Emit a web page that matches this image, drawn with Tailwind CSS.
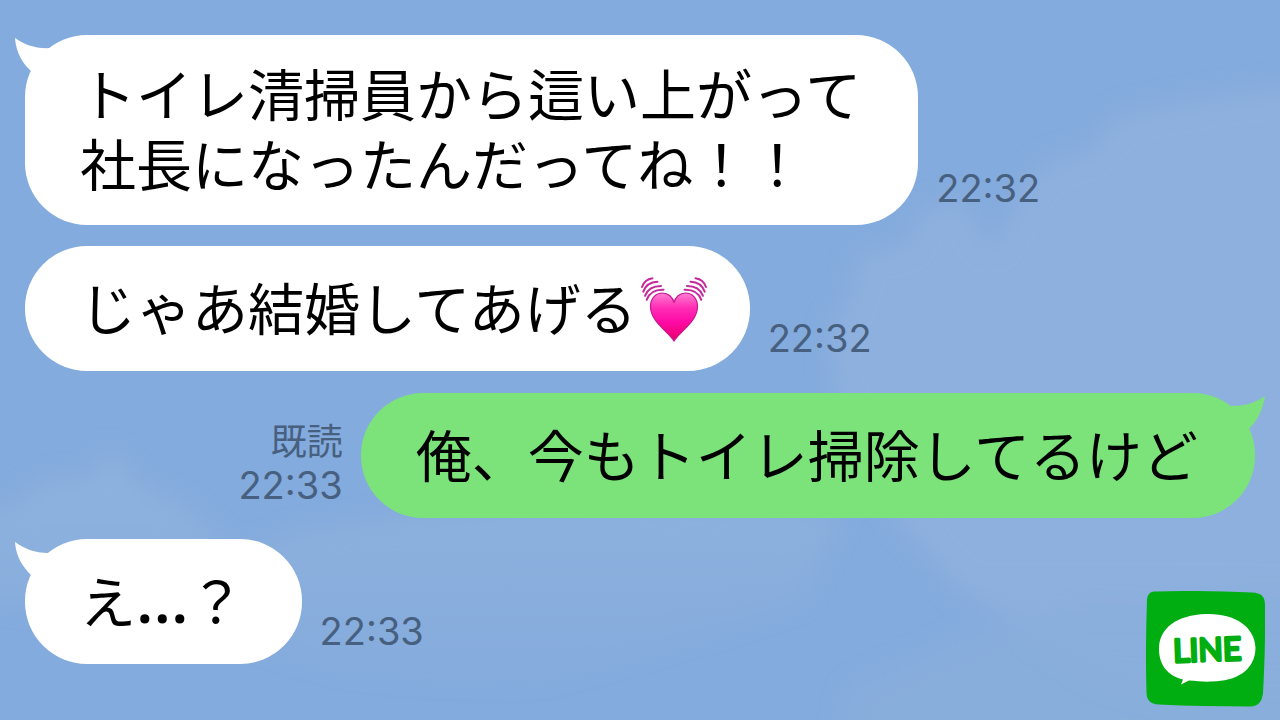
<!DOCTYPE html>
<html lang="ja">
<head>
  <meta charset="utf-8" />
  <meta name="viewport" content="width=device-width, initial-scale=1" />
  <title>LINE トーク</title>
  <script src="https://cdn.jsdelivr.net/npm/@tailwindcss/browser@4"></script>
</head>
<body class="relative min-h-screen overflow-x-hidden bg-[#84abdd] font-['Noto_Sans_CJK_JP',sans-serif] text-black">

  <!-- Sky background -->
  <svg class="absolute inset-0 h-full w-full" viewBox="0 0 1280 720" preserveAspectRatio="none" aria-hidden="true">
    <defs>
      <filter id="soft" x="-20%" y="-20%" width="140%" height="140%"><feGaussianBlur stdDeviation="12" /></filter>
      <linearGradient id="cloudLeft" x1="0" y1="0" x2="0" y2="1">
        <stop offset="0" stop-color="#90b3de" />
        <stop offset="1" stop-color="#90b3de" stop-opacity="0" />
      </linearGradient>
      <linearGradient id="cloudRight" x1="0" y1="0" x2="0" y2="1">
        <stop offset="0" stop-color="#8eb0de" />
        <stop offset="0.75" stop-color="#8eb0de" />
        <stop offset="1" stop-color="#8bafdc" stop-opacity="0.4" />
      </linearGradient>
    </defs>
    <g filter="url(#soft)">
      <path fill="url(#cloudRight)" d="M1310 85 L1200 100 L1120 115 L1090 150 L1045 165 L1020 200 L990 250 L965 200 L925 210 L905 245 L860 255 L850 300 L830 330 L835 390 L900 520 L960 590 L1100 680 L1310 740 Z" />
      <path fill="url(#cloudLeft)" d="M-20 515 L20 500 L50 480 L90 480 L112 450 L130 480 L190 510 L240 560 L290 535 L350 525 L420 515 L700 500 L840 515 L800 600 L520 690 L340 670 L200 620 L-20 600 Z" />
      <path fill="#8bafdc" fill-opacity="0.6" d="M850 690 L960 640 L1080 600 L1310 580 L1310 750 L840 750 Z" />
    </g>
  </svg>

  <main class="relative flex flex-col gap-[21px] px-[25px] py-[35px]">

    <div class="flex items-end gap-[18px]">
      <div class="relative flex min-h-[125px] items-center rounded-[62px] bg-white pt-[22px] pr-[57px] pb-[28px] pl-[55px]">
        <svg class="absolute top-[3px] -left-[10px] h-[34px] w-[44px] text-white" viewBox="0 0 44 34" fill="currentColor" aria-hidden="true">
          <path d="M0 0 C10 7 21 11 36 10 L44 22 L17 34 C8 26 1 15 0 0 Z" />
        </svg>
        <p class="relative text-[56px] leading-[70px]">トイレ清掃員から這い上がって<br>社長になったんだってね！！</p>
      </div>
      <time class="pb-[14px] font-[Inter,sans-serif] text-[38px] leading-[46px] text-[#47607f]">22:32</time>
    </div>

    <div class="flex items-end gap-[18px]">
      <div class="flex min-h-[125px] items-center rounded-[62px] bg-white pt-[22px] pr-[42px] pb-[28px] pl-[55px]">
        <p class="text-[56px] leading-[70px]">じゃあ結婚してあげる</p>
        <svg class="mt-[8px] ml-[3px] h-[66px] w-[68px]" viewBox="0 0 68 66" role="img" aria-label="ドキドキするハート">
          <defs>
            <linearGradient id="heart" x1="0" y1="0" x2="0" y2="1">
              <stop offset="0" stop-color="#ff7fd2" />
              <stop offset="0.3" stop-color="#ff2fb6" />
              <stop offset="0.6" stop-color="#ff0aa6" />
              <stop offset="1" stop-color="#e80068" />
            </linearGradient>
          </defs>
          <path fill="url(#heart)" stroke="#c8188f" stroke-width="1.200" d="M34 64 C29 55 10.500 45 10.500 29.500 C10.500 21 16 16 22.500 16 C28 16 33 20 34 26 C35 20 40 16 45.500 16 C52 16 57.500 21 57.500 29.500 C57.500 45 39 55 34 64 Z" />
          <g fill="none" stroke="#c42a9a" stroke-width="2" stroke-linecap="round">
            <path d="M2 10 C3.500 5.500 7 2 12.500 1.200" />
            <path d="M3.300 14.700 C5.500 8.500 10.500 5 17.500 4.800" />
            <path d="M5 18.800 C7.500 12.500 13 9 21 9" />
            <path d="M6.700 22.800 C9 16.500 15 12.500 23.500 12.800" />
            <path d="M66 10 C64.500 5.500 61 2 55.500 1.200" />
            <path d="M64.700 14.700 C62.500 8.500 57.500 5 50.500 4.800" />
            <path d="M63 18.800 C60.500 12.500 55 9 47 9" />
            <path d="M61.300 22.800 C59 16.500 53 12.500 44.500 12.800" />
          </g>
        </svg>
      </div>
      <time class="pb-[10px] font-[Inter,sans-serif] text-[38px] leading-[46px] text-[#47607f]">22:32</time>
    </div>

    <!-- Own message -->
    <div class="flex items-end justify-end gap-[18px] pt-px">
      <div class="flex flex-col items-end pb-[10px] text-[#47607f]">
        <span class="text-[36px] leading-[46px]">既読</span>
        <time class="font-[Inter,sans-serif] text-[38px] leading-[46px]">22:33</time>
      </div>
      <div class="relative flex min-h-[125px] items-center rounded-[62px] bg-[#7be37a] pt-[22px] pr-[57px] pb-[28px] pl-[55px]">
        <svg class="absolute top-[3px] -right-[10px] h-[34px] w-[44px] text-[#7be37a]" viewBox="0 0 44 34" fill="currentColor" aria-hidden="true">
          <path d="M44 0 C34 7 24 10 10 10 L0 22 L28 33 C36 25 42 14 44 0 Z" />
        </svg>
        <p class="relative text-[56px] leading-[70px]">俺、今もトイレ掃除してるけど</p>
      </div>
    </div>

    <div class="flex items-end gap-[18px]">
      <div class="relative flex min-h-[125px] items-center rounded-[62px] bg-white pt-[22px] pr-[57px] pb-[28px] pl-[55px]">
        <svg class="absolute top-[3px] -left-[10px] h-[34px] w-[44px] text-white" viewBox="0 0 44 34" fill="currentColor" aria-hidden="true">
          <path d="M0 0 C10 7 20 11 33 11 L44 22 L16 33 C8 25 1 15 0 0 Z" />
        </svg>
        <p class="relative text-[56px] leading-[70px]">え<span class="font-['Open_Sans',sans-serif] text-[64px] leading-none font-semibold">...</span>？</p>
      </div>
      <time class="pb-[10px] font-[Inter,sans-serif] text-[38px] leading-[46px] text-[#47607f]">22:33</time>
    </div>
  </main>

  <!-- App logo -->
  <svg class="absolute right-[15px] bottom-[13px] h-[116px] w-[119px]" viewBox="0 0 119 116" role="img" aria-label="LINE">
    <path fill="#00ae12" d="M10 0.500 C40 -0.500 75 0 106 1.500 C115 2 119 5 119 14 C119.500 45 118.500 75 117 102 C116 111 112 116 103 115.500 C72 115 42 115 13 113.500 C4 113 0.500 109 0.500 101 C-0.500 70 0 40 1 9 C1.500 3 4 0.500 10 0.500 Z" />
    <path fill="#fff" d="M60 23 C89 22 109 36 109.500 57 C109 80 90 90 66 90.500 C58 91 51 90 43 89.500 L35 93.500 L37 88.500 C22 85 13 74 13 58 C13 37 31 24 60 23 Z" />
    <text x="27" y="70" transform="rotate(-2 62 58)" font-family="Lato, sans-serif" font-weight="400" font-size="32" fill="#00ae12" stroke="#00ae12" stroke-width="3" stroke-linejoin="round">LINE</text>
  </svg>
</body>
</html>
